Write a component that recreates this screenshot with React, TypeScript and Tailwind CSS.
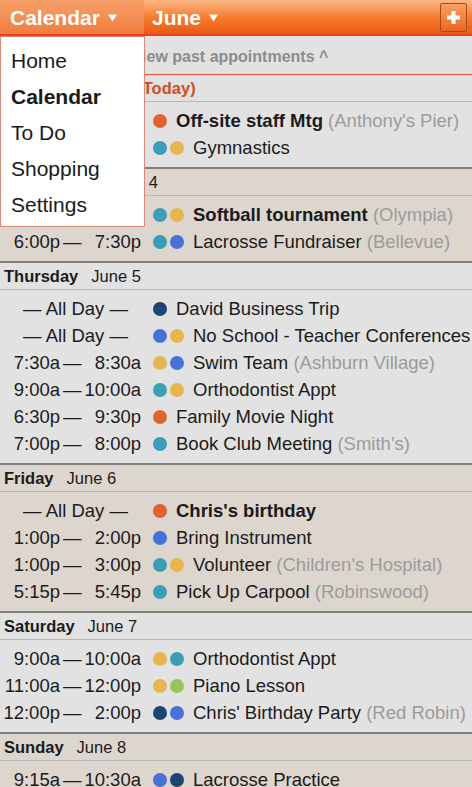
import React from "react";

type Ev = {
  all?: boolean;
  s?: string;
  e?: string;
  dots: string[];
  title: string;
  bold?: boolean;
  loc?: string;
};

type Day = { name: string; date: string; today?: boolean; bg: string; events: Ev[] };

const O = "bg-[#de632c]";
const T = "bg-[#3a9fb6]";
const G = "bg-[#e6b64c]";
const B = "bg-[#4672d8]";
const N = "bg-[#1c4474]";
const Gr = "bg-[#98c45c]";

const GRAY = "bg-[#e2e2e2]";
const BEIGE = "bg-[#ddd6cf]";

const days: Day[] = [
  {
    name: "Tuesday",
    date: "June 3",
    today: true,
    bg: GRAY,
    events: [
      { s: "8:00a", e: "12:00p", dots: [O], title: "Off-site staff Mtg", bold: true, loc: "(Anthony's Pier)" },
      { s: "4:00p", e: "5:30p", dots: [T, G], title: "Gymnastics" },
    ],
  },
  {
    name: "Wednesday",
    date: "June 4",
    bg: BEIGE,
    events: [
      { s: "9:00a", e: "3:00p", dots: [T, G], title: "Softball tournament", bold: true, loc: "(Olympia)" },
      { s: "6:00p", e: "7:30p", dots: [T, B], title: "Lacrosse Fundraiser", loc: "(Bellevue)" },
    ],
  },
  {
    name: "Thursday",
    date: "June 5",
    bg: GRAY,
    events: [
      { all: true, dots: [N], title: "David Business Trip" },
      { all: true, dots: [B, G], title: "No School - Teacher Conferences" },
      { s: "7:30a", e: "8:30a", dots: [G, B], title: "Swim Team", loc: "(Ashburn Village)" },
      { s: "9:00a", e: "10:00a", dots: [T, G], title: "Orthodontist Appt" },
      { s: "6:30p", e: "9:30p", dots: [O], title: "Family Movie Night" },
      { s: "7:00p", e: "8:00p", dots: [T], title: "Book Club Meeting", loc: "(Smith's)" },
    ],
  },
  {
    name: "Friday",
    date: "June 6",
    bg: BEIGE,
    events: [
      { all: true, dots: [O], title: "Chris's birthday", bold: true },
      { s: "1:00p", e: "2:00p", dots: [B], title: "Bring Instrument" },
      { s: "1:00p", e: "3:00p", dots: [T, G], title: "Volunteer", loc: "(Children's Hospital)" },
      { s: "5:15p", e: "5:45p", dots: [T], title: "Pick Up Carpool", loc: "(Robinswood)" },
    ],
  },
  {
    name: "Saturday",
    date: "June 7",
    bg: GRAY,
    events: [
      { s: "9:00a", e: "10:00a", dots: [G, T], title: "Orthodontist Appt" },
      { s: "11:00a", e: "12:00p", dots: [G, Gr], title: "Piano Lesson" },
      { s: "12:00p", e: "2:00p", dots: [N, B], title: "Chris' Birthday Party", loc: "(Red Robin)" },
    ],
  },
  {
    name: "Sunday",
    date: "June 8",
    bg: BEIGE,
    events: [
      { s: "9:15a", e: "10:30a", dots: [B, N], title: "Lacrosse Practice" },
      { s: "1:00p", e: "3:00p", dots: [T], title: "Family Picnic" },
    ],
  },
];

function Tri() {
  return (
    <svg width="9" height="8" viewBox="0 0 9 8" className="ml-[8px] mt-[2px]">
      <path d="M0 0.5 L9 0.5 L4.5 7.5 Z" fill="#ffffff" />
    </svg>
  );
}

function EventRow({ ev }: { ev: Ev }) {
  return (
    <div className="flex items-center h-[27px] whitespace-nowrap text-[18.5px] text-[#1b1b1b]">
      {ev.all ? (
        <div className="w-[151px] shrink-0 text-center">— All Day —</div>
      ) : (
        <div className="w-[151px] shrink-0 flex pr-[10px]">
          <span className="w-[60px] text-right">{ev.s}</span>
          <span className="ml-[3px] w-[18px]">—</span>
          <span className="flex-1 text-right">{ev.e}</span>
        </div>
      )}
      <div className="flex gap-[3px] ml-[2px] shrink-0">
        {ev.dots.map((d, i) => (
          <span key={i} className={`block w-[14px] h-[14px] rounded-full ${d}`} />
        ))}
      </div>
      <span className="ml-[9px]">
        <span className={ev.bold ? "font-bold" : ""}>{ev.title}</span>
        {ev.loc ? <span className="text-[#9b9b9b]"> {ev.loc}</span> : null}
      </span>
    </div>
  );
}

function DayBlock({ day, first }: { day: Day; first: boolean }) {
  return (
    <div className={`${day.bg} ${first ? "" : "border-t-2 border-[#7f7f7f]"}`}>
      <div className="h-[27px] flex items-center pl-[4px] pt-[1px] text-[16.5px] text-[#1b1b1b] border-b border-[#b7b7b7] whitespace-nowrap">
        <span className="font-bold">{day.name}</span>
        <span className="ml-[13px]">{day.date}</span>
        {day.today ? <span className="ml-[5px] font-bold text-[#cf4d23]">(Today)</span> : null}
      </div>
      <div className="py-[5.5px]">
        {day.events.map((ev, i) => (
          <EventRow key={i} ev={ev} />
        ))}
      </div>
    </div>
  );
}

export default function App() {
  return (
    <div
      className="relative w-[472px] h-[787px] overflow-hidden bg-[#e2e2e2]"
      style={{ fontFamily: '"Liberation Sans", Arial, sans-serif' }}
    >
      {/* Top bar */}
      <div className="flex items-stretch h-[36px] bg-gradient-to-b from-[#fbb783] via-[#f57d2e] to-[#ee5814] border-b-2 border-[#e8421c]">
        <div className="w-[144px] flex items-center pl-[10px] bg-gradient-to-b from-[#f7a06a] to-[#f07c3c]">
          <span className="text-white font-bold text-[21px] leading-none">Calendar</span>
          <Tri />
        </div>
        <div className="flex items-center pl-[8px] flex-1">
          <span className="text-white font-bold text-[21px] leading-none">June</span>
          <Tri />
        </div>
        <div className="flex items-center pr-[5px]">
          <div className="w-[27px] h-[29px] rounded-[2px] border border-[#a9491b] bg-gradient-to-b from-[#f8a060] to-[#e8661f] flex items-center justify-center">
            <svg width="13" height="13" viewBox="0 0 13 13">
              <rect x="4.5" y="0" width="4" height="13" fill="#ffffff" />
              <rect x="0" y="4.5" width="13" height="4" fill="#ffffff" />
            </svg>
          </div>
        </div>
      </div>

      {/* View past */}
      <div className="h-[39px] flex items-center justify-center pr-[12px] pt-[4px] bg-[#e2e2e2] border-b border-[#e8503a]">
        <span className="text-[16px] font-bold text-[#8c8c8c]">View past appointments ^</span>
      </div>

      {days.map((d, i) => (
        <DayBlock key={i} day={d} first={i === 0} />
      ))}

      {/* Dropdown menu */}
      <div className="absolute left-0 top-[36px] w-[145px] h-[191px] bg-white border border-[#d9887a] pt-[6px]">
        {["Home", "Calendar", "To Do", "Shopping", "Settings"].map((t) => (
          <div
            key={t}
            className={`h-[36px] flex items-center pl-[10px] text-[21px] text-[#1a1a1a] ${t === "Calendar" ? "font-bold" : ""}`}
          >
            {t}
          </div>
        ))}
      </div>
    </div>
  );
}
